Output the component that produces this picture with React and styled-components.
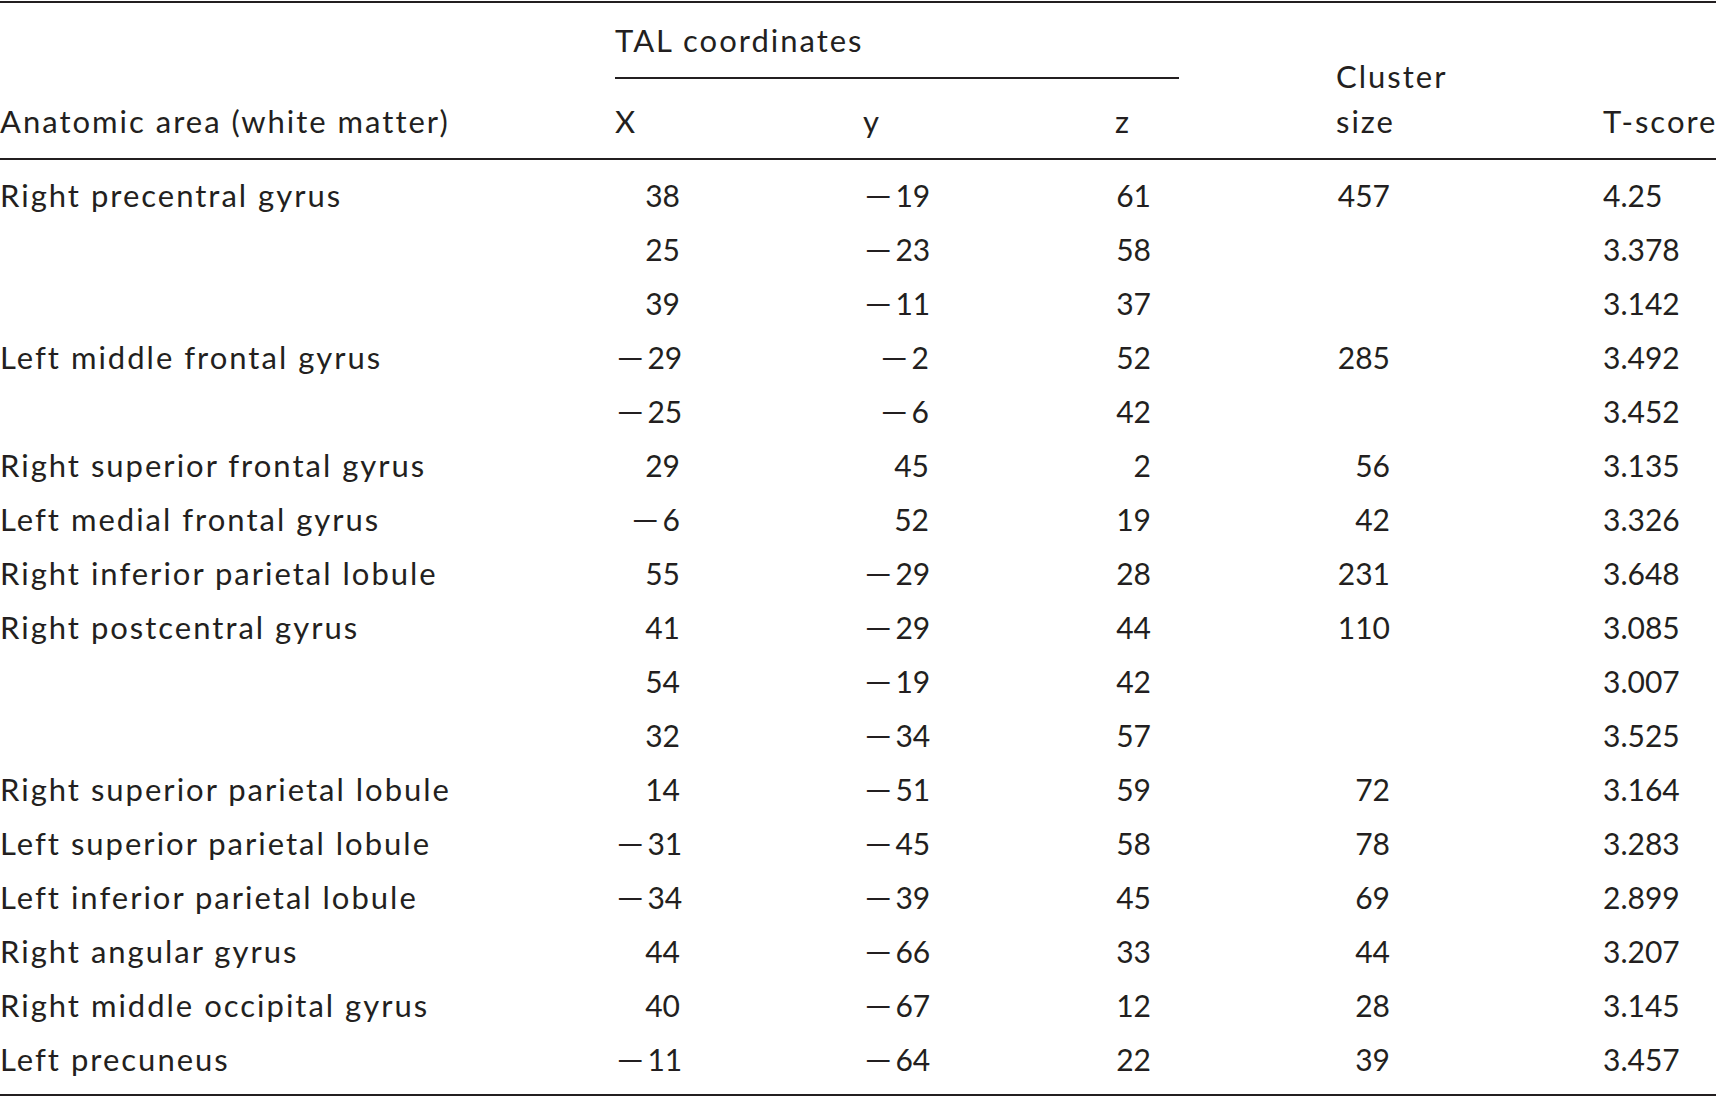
import React from "react";
import styled, { createGlobalStyle } from "styled-components";

const Global = createGlobalStyle`
  html, body { margin: 0; padding: 0; background: #ffffff; overflow: hidden; }
  body { font-family: Lato, "Open Sans", sans-serif; color: #231f20; }
`;

const Frame = styled.div`
  margin-top: 1px;
  border-top: 2px solid #231f20;
  border-bottom: 2px solid #231f20;
  width: 1716px;
  overflow: hidden;
`;

const Table = styled.table`
  width: 100%;
  table-layout: fixed;
  border-collapse: separate;
  border-spacing: 0;
  font-family: Lato, "Open Sans", sans-serif;
  color: #231f20;
`;

const HeadCell = styled.th`
  font-weight: 400;
  font-size: 31px;
  letter-spacing: 2px;
  text-align: left;
  vertical-align: bottom;
  line-height: 45px;
  padding: ${(p) => (p.$top ? "15.3px" : p.$span ? "0" : "19.6px")} 0
    ${(p) => (p.$top ? "0" : "14.4px")} 0;
  white-space: nowrap;
`;

const Spanner = styled.div`
  width: 564px;
  padding-bottom: 13.7px;
  border-bottom: 2px solid #231f20;
`;

const Row = styled.tr`
  &:first-child td {
    border-top: 2px solid #231f20;
    padding-top: 8.2px;
  }
  &:last-child td {
    padding-bottom: 8px;
  }
`;

const Cell = styled.td`
  line-height: 54px;
  height: 54px;
  font-size: ${(p) => (p.$num ? "30px" : "31px")};
  letter-spacing: ${(p) => (p.$num ? "0" : "2px")};
  padding: 0 ${(p) => (p.$pr != null ? `${p.$pr}px` : "0")} 0 0;
  text-align: ${(p) => (p.$pr != null ? "right" : "left")};
  white-space: nowrap;
`;

const Minus = styled.span`
  display: inline-block;
  transform: scaleX(1.75);
  transform-origin: left center;
  margin-right: 15px;
`;

const cols = [
  { w: 615 },
  { w: 248, pr: 183 },
  { w: 252, pr: 186 },
  { w: 221, pr: 185 },
  { w: 267, pr: 213 },
  { w: 113 },
];

const M = "\u2212";

const rows = [
  ["Right precentral gyrus", "38", M + "19", "61", "457", "4.25"],
  ["", "25", M + "23", "58", "", "3.378"],
  ["", "39", M + "11", "37", "", "3.142"],
  ["Left middle frontal gyrus", M + "29", M + "2", "52", "285", "3.492"],
  ["", M + "25", M + "6", "42", "", "3.452"],
  ["Right superior frontal gyrus", "29", "45", "2", "56", "3.135"],
  ["Left medial frontal gyrus", M + "6", "52", "19", "42", "3.326"],
  ["Right inferior parietal lobule", "55", M + "29", "28", "231", "3.648"],
  ["Right postcentral gyrus", "41", M + "29", "44", "110", "3.085"],
  ["", "54", M + "19", "42", "", "3.007"],
  ["", "32", M + "34", "57", "", "3.525"],
  ["Right superior parietal lobule", "14", M + "51", "59", "72", "3.164"],
  ["Left superior parietal lobule", M + "31", M + "45", "58", "78", "3.283"],
  ["Left inferior parietal lobule", M + "34", M + "39", "45", "69", "2.899"],
  ["Right angular gyrus", "44", M + "66", "33", "44", "3.207"],
  ["Right middle occipital gyrus", "40", M + "67", "12", "28", "3.145"],
  ["Left precuneus", M + "11", M + "64", "22", "39", "3.457"],
];

function Value({ v }) {
  if (v.startsWith(M)) {
    return (
      <>
        <Minus>{M}</Minus>
        {v.slice(1)}
      </>
    );
  }
  return v;
}

export default function App() {
  return (
    <>
      <Global />
      <Frame>
        <Table>
          <colgroup>
            {cols.map((c, i) => (
              <col key={i} style={{ width: c.w }} />
            ))}
          </colgroup>
          <thead>
            <tr>
              <HeadCell rowSpan={2} $span>
                Anatomic area (white matter)
              </HeadCell>
              <HeadCell colSpan={3} $top>
                <Spanner>TAL coordinates</Spanner>
              </HeadCell>
              <HeadCell rowSpan={2} $span>
                Cluster
                <br />
                size
              </HeadCell>
              <HeadCell rowSpan={2} $span>
                T-score
              </HeadCell>
            </tr>
            <tr>
              <HeadCell>X</HeadCell>
              <HeadCell>y</HeadCell>
              <HeadCell>z</HeadCell>
            </tr>
          </thead>
          <tbody>
            {rows.map((r, i) => (
              <Row key={i}>
                {r.map((v, j) => (
                  <Cell key={j} $pr={cols[j].pr} $num={j > 0}>
                    <Value v={v} />
                  </Cell>
                ))}
              </Row>
            ))}
          </tbody>
        </Table>
      </Frame>
    </>
  );
}
